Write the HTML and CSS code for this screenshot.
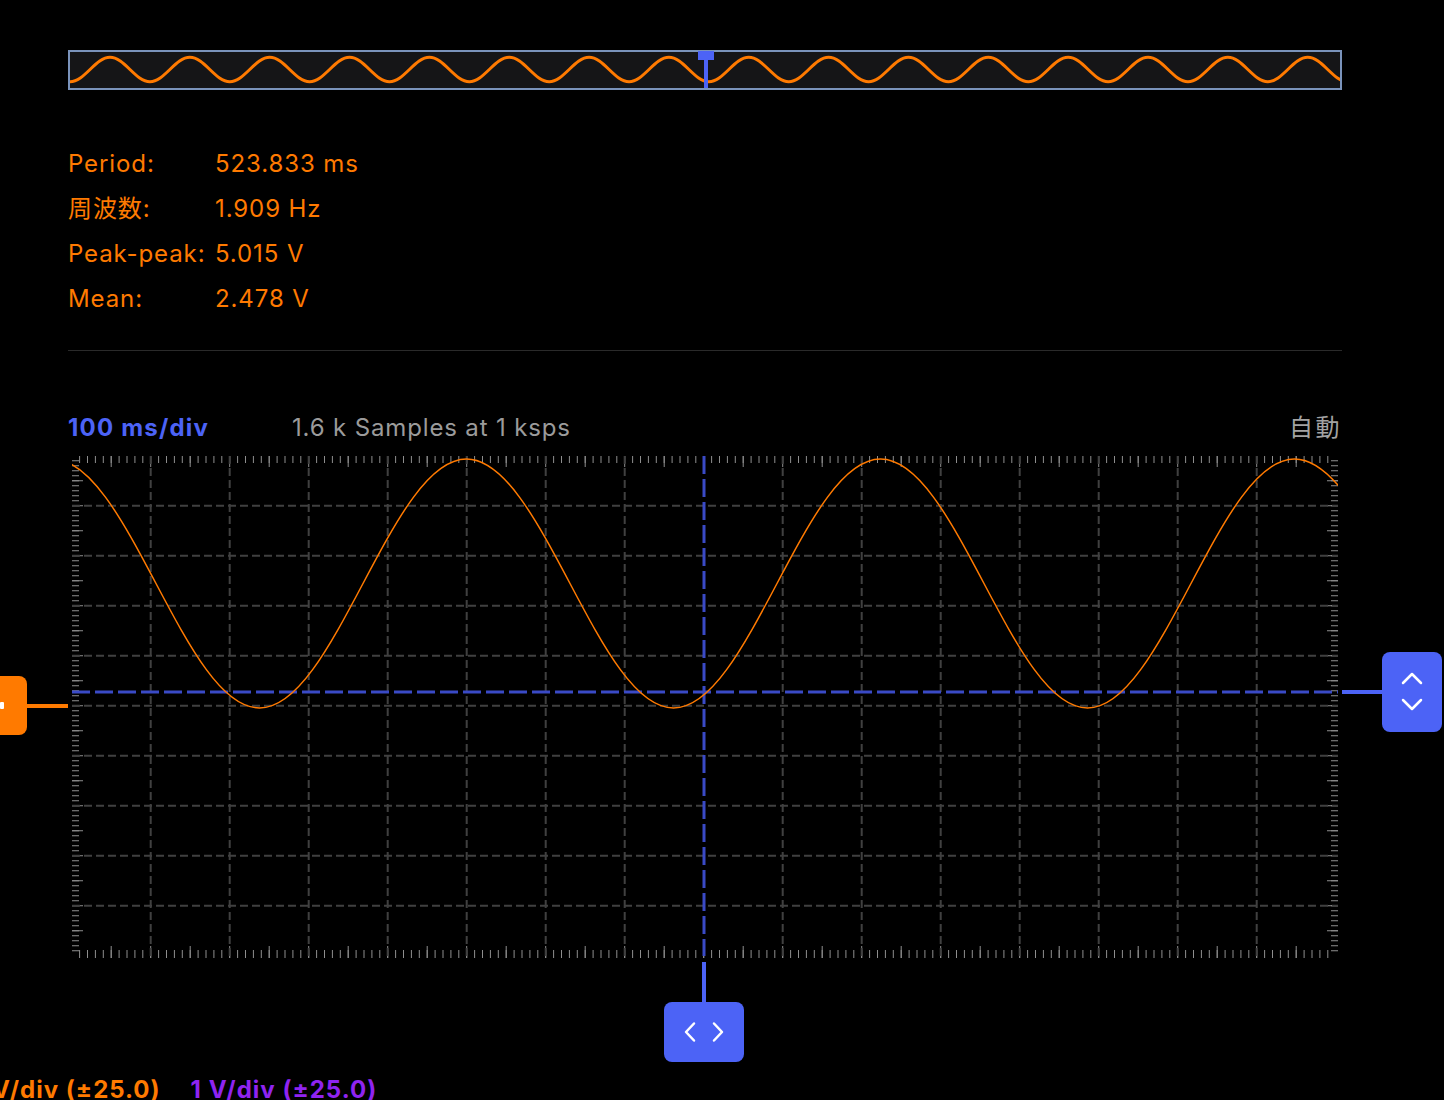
FILE: index.html
```html
<!DOCTYPE html>
<html lang="ja">
<head>
<meta charset="utf-8">
<title>Scope</title>
<link rel="stylesheet" href="styles.css">
</head>
<body>
<div class="page">
  <svg class="overview" width="1274" height="40" viewBox="68 50 1274 40">
    <defs>
      <clipPath id="ovclip"><rect x="70" y="52" width="1270" height="36"/></clipPath>
    </defs>
    <rect x="69" y="51" width="1272" height="38" fill="#151517" stroke="#7a93bb" stroke-width="2"/>
    <path class="ov-wave" clip-path="url(#ovclip)" d="M10.19 69.5c6.511 -6.25 12.738 -12.2 19.9625 -12.2
      s13.452 5.95 19.9625 12.2s12.738 12.2 19.9625 12.2s13.452 -5.95 19.9625 -12.2s12.738 -12.2 19.9625 -12.2
      s13.452 5.95 19.9625 12.2s12.738 12.2 19.9625 12.2s13.452 -5.95 19.9625 -12.2s12.738 -12.2 19.9625 -12.2
      s13.452 5.95 19.9625 12.2s12.738 12.2 19.9625 12.2s13.452 -5.95 19.9625 -12.2s12.738 -12.2 19.9625 -12.2
      s13.452 5.95 19.9625 12.2s12.738 12.2 19.9625 12.2s13.452 -5.95 19.9625 -12.2s12.738 -12.2 19.9625 -12.2
      s13.452 5.95 19.9625 12.2s12.738 12.2 19.9625 12.2s13.452 -5.95 19.9625 -12.2s12.738 -12.2 19.9625 -12.2
      s13.452 5.95 19.9625 12.2s12.738 12.2 19.9625 12.2s13.452 -5.95 19.9625 -12.2s12.738 -12.2 19.9625 -12.2
      s13.452 5.95 19.9625 12.2s12.738 12.2 19.9625 12.2s13.452 -5.95 19.9625 -12.2s12.738 -12.2 19.9625 -12.2
      s13.452 5.95 19.9625 12.2s12.738 12.2 19.9625 12.2s13.452 -5.95 19.9625 -12.2s12.738 -12.2 19.9625 -12.2
      s13.452 5.95 19.9625 12.2s12.738 12.2 19.9625 12.2s13.452 -5.95 19.9625 -12.2s12.738 -12.2 19.9625 -12.2
      s13.452 5.95 19.9625 12.2s12.738 12.2 19.9625 12.2s13.452 -5.95 19.9625 -12.2s12.738 -12.2 19.9625 -12.2
      s13.452 5.95 19.9625 12.2s12.738 12.2 19.9625 12.2s13.452 -5.95 19.9625 -12.2s12.738 -12.2 19.9625 -12.2
      s13.452 5.95 19.9625 12.2s12.738 12.2 19.9625 12.2s13.452 -5.95 19.9625 -12.2s12.738 -12.2 19.9625 -12.2
      s13.452 5.95 19.9625 12.2s12.738 12.2 19.9625 12.2s13.452 -5.95 19.9625 -12.2s12.738 -12.2 19.9625 -12.2
      s13.452 5.95 19.9625 12.2s12.738 12.2 19.9625 12.2s13.452 -5.95 19.9625 -12.2s12.738 -12.2 19.9625 -12.2
      s13.452 5.95 19.9625 12.2s12.738 12.2 19.9625 12.2s13.452 -5.95 19.9625 -12.2s12.738 -12.2 19.9625 -12.2
      s13.452 5.95 19.9625 12.2s12.738 12.2 19.9625 12.2s13.452 -5.95 19.9625 -12.2s12.738 -12.2 19.9625 -12.2
      s13.452 5.95 19.9625 12.2s12.738 12.2 19.9625 12.2s13.452 -5.95 19.9625 -12.2s12.738 -12.2 19.9625 -12.2"/>
    <rect x="698" y="51" width="16" height="9" fill="#4c63f6"/>
    <rect x="704" y="51" width="4" height="37" fill="#4c63f6"/>
  </svg>

  <div class="measure">
    <span>Period:</span><span>523.833 ms</span>
    <span>周波数:</span><span>1.909 Hz</span>
    <span>Peak-peak:</span><span>5.015 V</span>
    <span>Mean:</span><span>2.478 V</span>
  </div>

  <div class="divider"></div>

  <div class="header">
    <span class="timebase">100 ms/div</span>
    <span class="samples">1.6 k Samples at 1 ksps</span>
    <span class="mode">自動</span>
  </div>

  <div class="plot">
    <svg width="1274" height="510" viewBox="68 452 1274 510">
      <defs>
        <clipPath id="plotclip"><rect x="72" y="450" width="1266" height="510"/></clipPath>
      </defs>
      <g class="ticks">
        <line x1="79.1" y1="459.5" x2="1332" y2="459.5" stroke-width="7" stroke-dasharray="1 6.9"/>
        <line x1="110.7" y1="461.5" x2="1300" y2="461.5" stroke-width="11" stroke-dasharray="1 38.5"/>
        <line x1="79.1" y1="954" x2="1332" y2="954" stroke-width="8" stroke-dasharray="1 6.9"/>
        <line x1="110.7" y1="952" x2="1300" y2="952" stroke-width="12" stroke-dasharray="1 38.5"/>
        <line x1="75.5" y1="460.2" x2="75.5" y2="953" stroke-width="7" stroke-dasharray="1 4"/>
        <line x1="77.5" y1="480.2" x2="77.5" y2="935" stroke-width="11" stroke-dasharray="1 24"/>
        <line x1="1334.5" y1="460.2" x2="1334.5" y2="953" stroke-width="7" stroke-dasharray="1 4"/>
        <line x1="1332.5" y1="480.2" x2="1332.5" y2="935" stroke-width="11" stroke-dasharray="1 24"/>
      </g>
      <g class="grid">
        <line x1="150.7" y1="456" x2="150.7" y2="956"/>
        <line x1="229.7" y1="456" x2="229.7" y2="956"/>
        <line x1="308.7" y1="456" x2="308.7" y2="956"/>
        <line x1="387.7" y1="456" x2="387.7" y2="956"/>
        <line x1="466.7" y1="456" x2="466.7" y2="956"/>
        <line x1="545.7" y1="456" x2="545.7" y2="956"/>
        <line x1="624.7" y1="456" x2="624.7" y2="956"/>
        <line x1="782.7" y1="456" x2="782.7" y2="956"/>
        <line x1="861.7" y1="456" x2="861.7" y2="956"/>
        <line x1="940.7" y1="456" x2="940.7" y2="956"/>
        <line x1="1019.7" y1="456" x2="1019.7" y2="956"/>
        <line x1="1098.7" y1="456" x2="1098.7" y2="956"/>
        <line x1="1177.7" y1="456" x2="1177.7" y2="956"/>
        <line x1="1256.7" y1="456" x2="1256.7" y2="956"/>
        <line x1="72" y1="505.7" x2="1338" y2="505.7"/>
        <line x1="72" y1="555.7" x2="1338" y2="555.7"/>
        <line x1="72" y1="605.7" x2="1338" y2="605.7"/>
        <line x1="72" y1="655.7" x2="1338" y2="655.7"/>
        <line x1="72" y1="705.7" x2="1338" y2="705.7"/>
        <line x1="72" y1="755.7" x2="1338" y2="755.7"/>
        <line x1="72" y1="805.7" x2="1338" y2="805.7"/>
        <line x1="72" y1="855.7" x2="1338" y2="855.7"/>
        <line x1="72" y1="905.7" x2="1338" y2="905.7"/>
      </g>
      <g class="cursor">
        <line x1="72" y1="692" x2="1338" y2="692"/>
        <line x1="704" y1="456" x2="704" y2="956"/>
      </g>
      <path class="wave" clip-path="url(#plotclip)" d="M-51 583.5c33.756 -63.78 66.043 -124.5 103.5 -124.5
        s69.745 60.72 103.5 124.5s66.043 124.5 103.5 124.5s69.745 -60.72 103.5 -124.5s66.043 -124.5 103.5 -124.5
        s69.745 60.72 103.5 124.5s66.043 124.5 103.5 124.5s69.745 -60.72 103.5 -124.5s66.043 -124.5 103.5 -124.5
        s69.745 60.72 103.5 124.5s66.043 124.5 103.5 124.5s69.745 -60.72 103.5 -124.5s66.043 -124.5 103.5 -124.5
        s69.745 60.72 103.5 124.5s66.043 124.5 103.5 124.5s69.745 -60.72 103.5 -124.5s66.043 -124.5 103.5 -124.5"/>
    </svg>

    <div class="handle handle-ch">
      <div class="hbox hbox-orange"><span class="ch-mark"></span></div>
      <div class="hline hline-orange"></div>
    </div>

    <div class="handle handle-trig">
      <div class="hline hline-blue"></div>
      <div class="hbox hbox-blue tall">
        <svg width="22" height="44" viewBox="0 0 22 44">
          <polyline points="2,13 11,4 20,13"/>
          <polyline points="2,30 11,39 20,30"/>
        </svg>
      </div>
    </div>

    <div class="handle handle-time">
      <div class="vline"></div>
      <div class="hbox hbox-blue wide">
        <svg width="44" height="22" viewBox="0 0 44 22">
          <polyline points="12,2.5 4,11 12,19.5"/>
          <polyline points="32,2.5 40,11 32,19.5"/>
        </svg>
      </div>
    </div>
  </div>

  <div class="scales">
    <span class="scale-ch1">1 V/div (±25.0)</span>
    <span class="scale-ch2">1 V/div (±25.0)</span>
  </div>
</div>
</body>
</html>
```

FILE: styles.css
```css
html, body {
  margin: 0;
  padding: 0;
  background: #000;
  overflow: hidden;
}

body {
  font-family: Inter, "Noto Sans CJK JP", sans-serif;
  font-size: 24px;
}

.page {
  width: 1274px;
  padding: 50px 0 0 68px;
}

svg {
  display: block;
}

.ov-wave {
  fill: none;
  stroke: #ff7a00;
  stroke-width: 3;
}

.measure {
  margin-top: 51px;
  display: grid;
  grid-template-columns: 147px auto;
  grid-auto-rows: 45px;
  line-height: 45px;
  letter-spacing: 0.9px;
  color: #ff7a00;
}

.divider {
  margin-top: 29px;
  height: 1px;
  background: #2a2a2a;
}

.header {
  margin-top: 61px;
  display: flex;
  line-height: 32px;
}

.timebase {
  width: 224px;
  font-weight: 700;
  letter-spacing: 1.2px;
  color: #4c63f6;
}

.samples {
  letter-spacing: 0.85px;
  color: #9b9b9b;
}

.mode {
  margin-left: auto;
  letter-spacing: 2.5px;
  color: #a3a3a3;
}

.plot {
  position: relative;
  margin-top: 8px;
  height: 510px;
}

.ticks line {
  stroke: #8e8e8e;
}

.grid line {
  stroke: #404040;
  stroke-width: 2;
  stroke-dasharray: 8 4;
}

.cursor line {
  stroke: #3a4ac6;
  stroke-width: 3;
  stroke-dasharray: 18 5;
}

.wave {
  fill: none;
  stroke: #ff7a00;
  stroke-width: 1.5;
}

.handle {
  position: absolute;
  display: flex;
  align-items: center;
}

.handle-ch {
  left: -101px;
  top: 224px;
}

.handle-trig {
  left: 1274px;
  top: 200px;
}

.handle-time {
  left: 596px;
  top: 510px;
  flex-direction: column;
}

.hbox {
  display: flex;
  align-items: center;
  justify-content: center;
  border-radius: 8px;
}

.hbox-orange {
  position: relative;
  width: 60px;
  height: 59px;
  background: #ff7a00;
}

.ch-mark {
  position: absolute;
  left: 33px;
  top: 26px;
  width: 4px;
  height: 7px;
  border-radius: 1px;
  background: #fff;
}

.hbox-blue {
  background: #4c63f6;
}

.tall {
  width: 60px;
  height: 80px;
}

.wide {
  width: 80px;
  height: 60px;
}

.hbox polyline {
  fill: none;
  stroke: #fff;
  stroke-width: 2.5;
  stroke-linecap: round;
  stroke-linejoin: round;
}

.hline {
  height: 4px;
}

.hline-orange {
  width: 41px;
  background: #ff7a00;
}

.hline-blue {
  width: 40px;
  background: #4c63f6;
}

.vline {
  width: 4px;
  height: 40px;
  background: #4c63f6;
}

.scales {
  margin-top: 112px;
  margin-left: -94px;
  display: flex;
  gap: 30px;
  line-height: 32px;
  font-weight: 700;
  letter-spacing: 1px;
  white-space: nowrap;
}

.scale-ch1 {
  color: #ff7a00;
}

.scale-ch2 {
  color: #8f24f0;
}
```
